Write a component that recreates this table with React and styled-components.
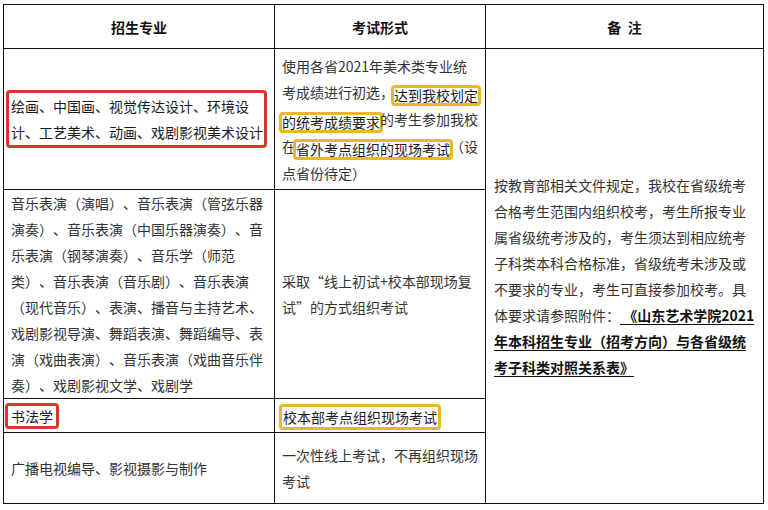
import React from 'react';
import styled, { createGlobalStyle } from "styled-components";

const GlobalStyle = createGlobalStyle`
  body {
    margin: 0;
    background: #fff;
    font-family: "Noto Sans CJK SC", "Noto Sans", sans-serif;
    text-spacing-trim: space-all;
  }
`

const Page = styled.div`
  padding: 4px 0 0 3px;
`
const Table = styled.table`
  border-collapse: collapse;
  table-layout: fixed;
  width: 760px;
  font-size: 14px;
  color: #333;
`
const HeadCell = styled.th`
  height: 43px;
  padding: 0;
  border: 1.5px solid #111;
  font-weight: bold;
  color: #111;
  text-align: center;
  vertical-align: middle;
  white-space: pre;
`
const Cell = styled.td`
  height: ${props => props.h}px;
  padding: 0 ${props => props.pad || 7}px;
  border: 1.5px solid #111;
  vertical-align: middle;
  line-height: 26px;
`
const Line = styled.div`
  white-space: nowrap;
`
const RedBox = styled.div`
  margin-left: -5px;
  padding: 0 2px;
  border: 3px solid #d8362c;
  border-radius: 4px;
  color: #1a1a1a;
  line-height: 26px;
`
const RedTag = styled.span`
  display: inline-block;
  margin-left: -6px;
  padding: 0 3px;
  border: 3px solid #d8362c;
  border-radius: 4px;
  line-height: 20px;
  color: #1a1a1a;
`
const Mark = styled.span`
  display: inline-block;
  margin: 0 -3px;
  padding: 0 ${props => props.pad || 0}px;
  border: 3px solid #ebb72a;
  border-radius: 4px;
  line-height: ${props => props.lh || 15}px;
  vertical-align: ${props => props.lh ? 'middle' : '-3px'};
  color: #1a1a1a;
`
const LinkText = styled.span`
  font-weight: bold;
  color: #111;
  text-decoration: underline;
  text-underline-offset: 3px;
`

function Lines({ items }) {
  return items.map((l, i) => <Line key={i}>{l}</Line>)
}

function App() {
  return (
    <Page>
      <GlobalStyle />
      <Table>
        <colgroup>
          <col style={{ width: 271 }} />
          <col style={{ width: 211 }} />
          <col style={{ width: 278 }} />
        </colgroup>
        <thead>
          <tr>
            <HeadCell>招生专业</HeadCell>
            <HeadCell>考试形式</HeadCell>
            <HeadCell>备  注</HeadCell>
          </tr>
        </thead>
        <tbody>
          <tr>
            <Cell h={140}>
              <RedBox>
                <Line>绘画、中国画、视觉传达设计、环境设</Line>
                <Line>计、工艺美术、动画、戏剧影视美术设计</Line>
              </RedBox>
            </Cell>
            <Cell h={140}>
              <Line>使用各省2021年美术类专业统</Line>
              <Line>考成绩进行初选，<Mark>达到我校划定</Mark></Line>
              <Line><Mark>的统考成绩要求</Mark>的考生参加我校</Line>
              <Line>在<Mark>省外考点组织的现场考试</Mark>（设</Line>
              <Line>点省份待定）</Line>
            </Cell>
            <Cell rowSpan={4} h={452} pad={8}>
              <Lines items={[
                '按教育部相关文件规定，我校在省级统考',
                '合格考生范围内组织校考，考生所报专业',
                '属省级统考涉及的，考生须达到相应统考',
                '子科类本科合格标准，省级统考未涉及或',
                '不要求的专业，考生可直接参加校考。具',
              ]} />
              <Line>体要求请参照附件：<LinkText> 《山东艺术学院2021</LinkText></Line>
              <Line><LinkText>年本科招生专业（招考方向）与各省级统</LinkText></Line>
              <Line><LinkText>考子科类对照关系表》 </LinkText></Line>
            </Cell>
          </tr>
          <tr>
            <Cell h={208}>
              <Lines items={[
                '音乐表演（演唱）、音乐表演（管弦乐器',
                '演奏）、音乐表演（中国乐器演奏）、音',
                '乐表演（钢琴演奏）、音乐学（师范',
                '类）、音乐表演（音乐剧）、音乐表演',
                '（现代音乐）、表演、播音与主持艺术、',
                '戏剧影视导演、舞蹈表演、舞蹈编导、表',
                '演（戏曲表演）、音乐表演（戏曲音乐伴',
                '奏）、戏剧影视文学、戏剧学',
              ]} />
            </Cell>
            <Cell h={208}>
              <Lines items={[
                '采取“线上初试+校本部现场复',
                '试”的方式组织考试',
              ]} />
            </Cell>
          </tr>
          <tr>
            <Cell h={33}>
              <RedTag>书法学</RedTag>
            </Cell>
            <Cell h={33}>
              <Mark lh={20} pad={1}>校本部考点组织现场考试</Mark>
            </Cell>
          </tr>
          <tr>
            <Cell h={70}>
              <Line>广播电视编导、影视摄影与制作</Line>
            </Cell>
            <Cell h={70}>
              <Lines items={[
                '一次性线上考试，不再组织现场',
                '考试',
              ]} />
            </Cell>
          </tr>
        </tbody>
      </Table>
    </Page>
  )
}

export default App
